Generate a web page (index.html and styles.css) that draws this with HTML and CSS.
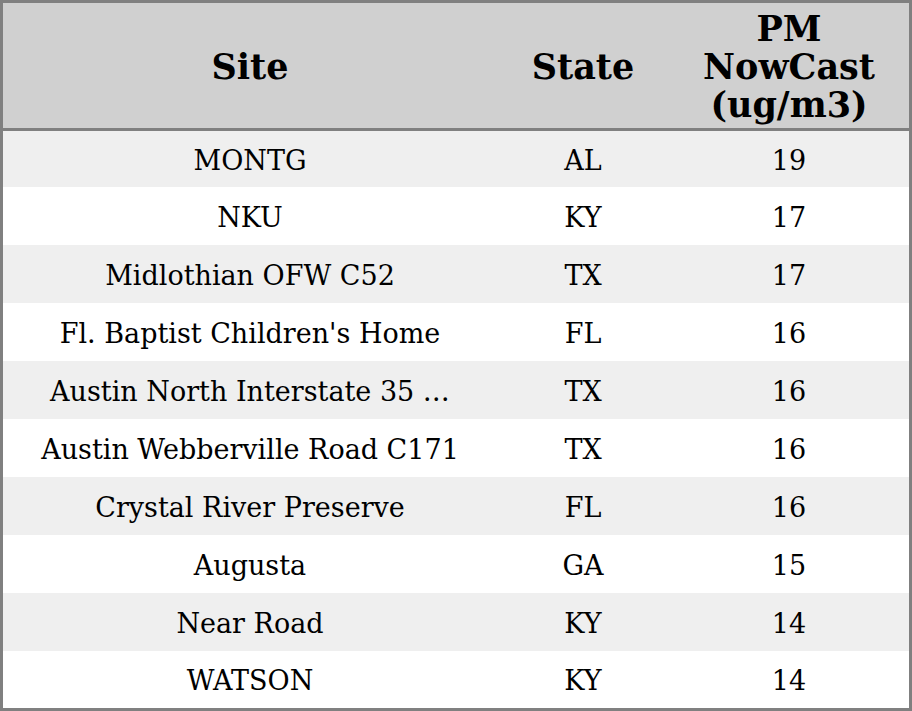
FILE: index.html
```html
<!DOCTYPE html>
<html>
<head>
<meta charset="utf-8">
<link rel="stylesheet" href="styles.css">
</head>
<body>
<table class="aq-table">
  <thead>
    <tr>
      <th class="col-site">Site</th>
      <th class="col-state">State</th>
      <th class="col-pm">PM<br>NowCast<br>(ug/m3)</th>
    </tr>
  </thead>
  <tbody>
    <tr class="odd"><td>MONTG</td><td>AL</td><td>19</td></tr>
    <tr><td>NKU</td><td>KY</td><td>17</td></tr>
    <tr class="odd"><td>Midlothian OFW C52</td><td>TX</td><td>17</td></tr>
    <tr><td>Fl. Baptist Children's Home</td><td>FL</td><td>16</td></tr>
    <tr class="odd"><td>Austin North Interstate 35 …</td><td>TX</td><td>16</td></tr>
    <tr><td>Austin Webberville Road C171</td><td>TX</td><td>16</td></tr>
    <tr class="odd"><td>Crystal River Preserve</td><td>FL</td><td>16</td></tr>
    <tr><td>Augusta</td><td>GA</td><td>15</td></tr>
    <tr class="odd"><td>Near Road</td><td>KY</td><td>14</td></tr>
    <tr><td>WATSON</td><td>KY</td><td>14</td></tr>
  </tbody>
</table>
</body>
</html>
```

FILE: styles.css
```css
html, body {
  margin: 0;
  padding: 0;
  background: #ffffff;
}
.aq-table {
  width: 912px;
  border-collapse: separate;
  border-spacing: 0;
  border: 3px solid #808080;
  font-family: "DejaVu Serif", serif;
  color: #000;
  table-layout: fixed;
}
.aq-table th {
  background: #d0d0d0;
  font-weight: bold;
  font-size: 35px;
  line-height: 38px;
  height: 128px;
  padding: 2px 0 0 0;
  box-sizing: border-box;
  text-align: center;
  vertical-align: middle;
  border-bottom: 3px solid #808080;
}
.col-site { width: 494px; }
.col-state { width: 172px; }
.col-pm { width: 240px; }
.aq-table td {
  font-size: 27px;
  height: 58px;
  padding: 2px 0 0 0;
  box-sizing: border-box;
  text-align: center;
  vertical-align: middle;
  white-space: nowrap;
}
.aq-table tbody tr:first-child td {
  height: 56px;
}
.aq-table tbody tr:last-child td {
  height: 57px;
}
.aq-table tr.odd td {
  background: #efefef;
}
```
